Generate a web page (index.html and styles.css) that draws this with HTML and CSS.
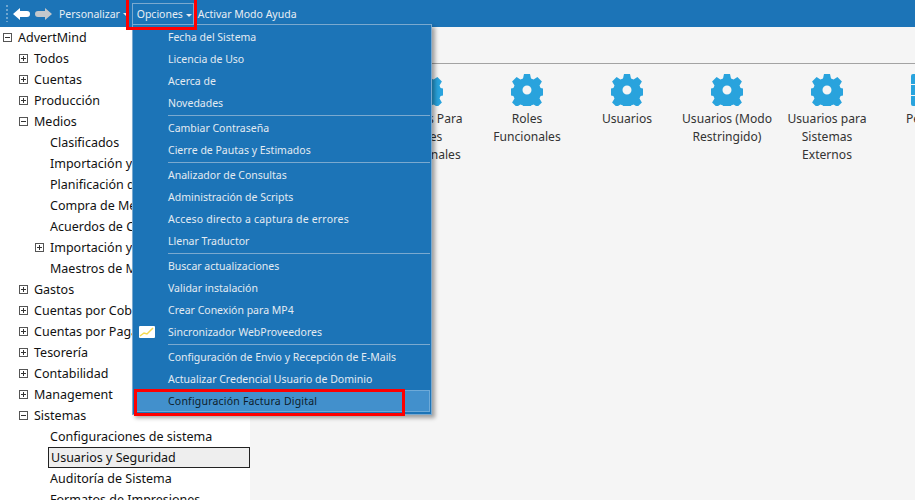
FILE: index.html
```html
<!DOCTYPE html>
<html lang="es">
<head>
<meta charset="utf-8">
<title>AdvertMind</title>
<link rel="stylesheet" href="styles.css">
</head>
<body>
<svg class="defs" width="0" height="0" aria-hidden="true">
  <symbol id="gear" viewBox="0 0 32 32">
    <path fill-rule="evenodd" d="M13 0h6l1 4.4 2.6 1.1 3.8-2.4 4.5 4.5-2.4 3.8 1.1 2.6 4.4 1v6l-4.4 1-1.1 2.6 2.4 3.8-4.5 4.5-3.8-2.4-2.600 1.100-1 4.400h-6l-1-4.400-2.600-1.100-3.800 2.400-4.500-4.500 2.400-3.800-1.100-2.600-4.400-1v-6l4.400-1 1.100-2.600-2.400-3.800 4.500-4.500 3.800 2.400 2.600-1.100zM16 11.500a4.500 4.500 0 1 0 0 9 4.500 4.500 0 0 0 0-9z"/>
  </symbol>
</svg>

<header class="topbar">
  <span class="grip"></span>
  <svg class="nav-arrow" width="17" height="12" viewBox="0 0 17 12"><path d="M0 6l7-6v3h7q3 0 3 3t-3 3H7v3z" fill="#fff"/></svg>
  <svg class="nav-arrow" width="17" height="12" viewBox="0 0 17 12"><path d="M17 6l-7-6v3H3Q0 3 0 6t3 3h7v3z" fill="#c4c8cc"/></svg>
  <span class="top-item personalize">Personalizar <i class="caret"></i></span>
  <span class="top-item options">Opciones <i class="caret"></i></span>
  <span class="top-item">Activar Modo Ayuda</span>
</header>

<div class="content">
  <nav class="tree">
    <div class="row d0"><i class="box"></i>AdvertMind</div>
    <div class="row d1"><i class="box plus"></i>Todos</div>
    <div class="row d1"><i class="box plus"></i>Cuentas</div>
    <div class="row d1"><i class="box plus"></i>Producción</div>
    <div class="row d1"><i class="box"></i>Medios</div>
    <div class="row d2">Clasificados</div>
    <div class="row d2">Importación y Exportación</div>
    <div class="row d2">Planificación de Medios</div>
    <div class="row d2">Compra de Medios</div>
    <div class="row d2">Acuerdos de Compra</div>
    <div class="row d2x"><i class="box plus"></i>Importación y Exportación</div>
    <div class="row d2">Maestros de Medios</div>
    <div class="row d1"><i class="box plus"></i>Gastos</div>
    <div class="row d1"><i class="box plus"></i>Cuentas por Cobrar</div>
    <div class="row d1"><i class="box plus"></i>Cuentas por Pagar</div>
    <div class="row d1"><i class="box plus"></i>Tesorería</div>
    <div class="row d1"><i class="box plus"></i>Contabilidad</div>
    <div class="row d1"><i class="box plus"></i>Management</div>
    <div class="row d1"><i class="box"></i>Sistemas</div>
    <div class="row d2">Configuraciones de sistema</div>
    <div class="row d2 selected">Usuarios y Seguridad</div>
    <div class="row d2">Auditoría de Sistema</div>
    <div class="row d2">Formatos de Impresiones</div>
  </nav>
  <main class="main">
    <div class="rule"></div>
    <div class="tiles">
      <div class="tile"><svg class="gear"><use href="#gear"/></svg><span>Perfiles Para<br>Roles<br>Funcionales</span></div>
      <div class="tile"><svg class="gear"><use href="#gear"/></svg><span>Roles<br>Funcionales</span></div>
      <div class="tile"><svg class="gear"><use href="#gear"/></svg><span>Usuarios</span></div>
      <div class="tile"><svg class="gear"><use href="#gear"/></svg><span>Usuarios (Modo<br>Restringido)</span></div>
      <div class="tile"><svg class="gear"><use href="#gear"/></svg><span>Usuarios para<br>Sistemas<br>Externos</span></div>
      <div class="tile"><svg class="gear" viewBox="0 0 32 32"><path d="M0 2q0-2 2-2h28q2 0 2 2v8H0zM0 11h32v10H0zM0 22h32v8q0 2-2 2H2q-2 0-2-2z"/></svg><span>Perfiles</span></div>
    </div>
  </main>
</div>

<div class="menu">
  <div class="mi">Fecha del Sistema</div>
  <div class="mi">Licencia de Uso</div>
  <div class="mi">Acerca de</div>
  <div class="mi">Novedades</div>
  <hr class="sep">
  <div class="mi">Cambiar Contraseña</div>
  <div class="mi">Cierre de Pautas y Estimados</div>
  <hr class="sep">
  <div class="mi">Analizador de Consultas</div>
  <div class="mi">Administración de Scripts</div>
  <div class="mi wide">Acceso directo a captura de errores</div>
  <div class="mi">Llenar Traductor</div>
  <hr class="sep">
  <div class="mi">Buscar actualizaciones</div>
  <div class="mi">Validar instalación</div>
  <div class="mi">Crear Conexión para MP4</div>
  <div class="mi with-icon">
    <svg class="mi-icon" width="16" height="12" viewBox="0 0 16 12"><rect width="16" height="12" rx="1" fill="#fff"/><path d="M1 10l4-3 3 1 6-6" fill="none" stroke="#f5d94f" stroke-width="1.500"/></svg>
    Sincronizador WebProveedores
  </div>
  <hr class="sep">
  <div class="mi">Configuración de Envio y Recepción de E-Mails</div>
  <div class="mi">Actualizar Credencial Usuario de Dominio</div>
  <div class="mi active wide">Configuración Factura Digital</div>
</div>

<div class="mark mark-options"></div>
<div class="mark mark-digital"></div>
</body>
</html>
```
FILE: styles.css
```css
* { box-sizing: border-box; }
html, body { margin: 0; height: 100%; overflow: hidden; }
body {
  position: relative;
  font-family: "Noto Sans", sans-serif;
  background: #f5f5f5;
  color: #111;
  display: flex;
  flex-direction: column;
}
.defs { position: absolute; }

.topbar {
  height: 27px;
  flex: none;
  background: #1c74b7;
  display: flex;
  align-items: center;
  color: #e8eef4;
  font-size: 10.500px;
}
.grip {
  width: 2px;
  height: 17px;
  margin-left: 6px;
  background: repeating-linear-gradient(#6fa6d0 0 2px, transparent 2px 4px);
}
.nav-arrow { margin-left: 5px; flex: none; }
.top-item { white-space: nowrap; }
.personalize { margin-left: 7px; }
.options {
  margin-left: 3px;
  height: 24px;
  margin-top: 3px;
  width: 62px;
  padding: 3px 0 0 4px;
  border: 1px solid #7aa9cf;
  border-bottom: 0;
  margin-right: 4px;
}
.caret {
  display: inline-block;
  border: 3px solid transparent;
  border-top-color: currentColor;
  border-bottom: 0;
  vertical-align: middle;
  margin-left: 0;
}

.content { flex: 1; display: flex; min-height: 0; }
.tree {
  width: 250px;
  flex: none;
  background: #fff;
  font-size: 12.500px;
  overflow: hidden;
}
.row {
  height: 21px;
  display: flex;
  align-items: center;
  white-space: nowrap;
}
.d0 { padding-left: 3px; }
.d1 { padding-left: 19px; }
.d2 { padding-left: 50px; }
.d2x { padding-left: 35px; }
.box {
  width: 9px;
  height: 9px;
  border: 1px solid #555;
  margin-right: 6px;
  flex: none;
  background:
    linear-gradient(#333, #333) center / 5px 1px no-repeat;
}
.box.plus {
  background:
    linear-gradient(#333, #333) center / 5px 1px no-repeat,
    linear-gradient(#333, #333) center / 1px 5px no-repeat;
}
.selected {
  margin-left: 48px;
  padding-left: 2px;
  border: 1px solid #222;
  background: #eee;
}

.main { flex: 1; min-width: 0; padding: 36px 0 0 2px; overflow: hidden; }
.rule { height: 1px; background: #a3a3a3; }
.tiles { display: flex; padding: 10px 0 0 125px; font-size: 12.100px; color: #333; }
.tile {
  width: 100px;
  flex: none;
  display: flex;
  flex-direction: column;
  align-items: center;
  text-align: center;
  line-height: 18px;
}
.tile span { margin-top: 4px; white-space: nowrap; }
.gear { width: 32px; height: 32px; fill: #29a3dd; display: block; }

.menu {
  position: absolute;
  left: 132px;
  top: 24px;
  width: 300px;
  padding: 1px 1px 2px;
  background: #1c74b7;
  border: 1px solid #7aa9cf;
  box-shadow: 3px 3px 4px rgba(0, 0, 0, .35);
  font-size: 10.500px;
  color: #e3ebf2;
}
.mi {
  position: relative;
  height: 22px;
  padding-left: 34px;
  display: flex;
  align-items: center;
  white-space: nowrap;
}
.wide { letter-spacing: .2px; }
.sep {
  height: 1px;
  margin: 1px 0 1px 34px;
  border: 0;
  background: #7aa9cf;
}
.mi-icon { position: absolute; left: 5px; top: 5px; }
.active {
  background: #4290cc;
  color: #0d1c2a;
  border: 1px solid #6eaad8;
  padding-left: 33px;
}

.mark { position: absolute; border: 3px solid #f00; pointer-events: none; }
.mark-options { left: 126px; top: -3px; width: 71px; height: 33px; }
.mark-digital { left: 134px; top: 389px; width: 271px; height: 27px; }
```
